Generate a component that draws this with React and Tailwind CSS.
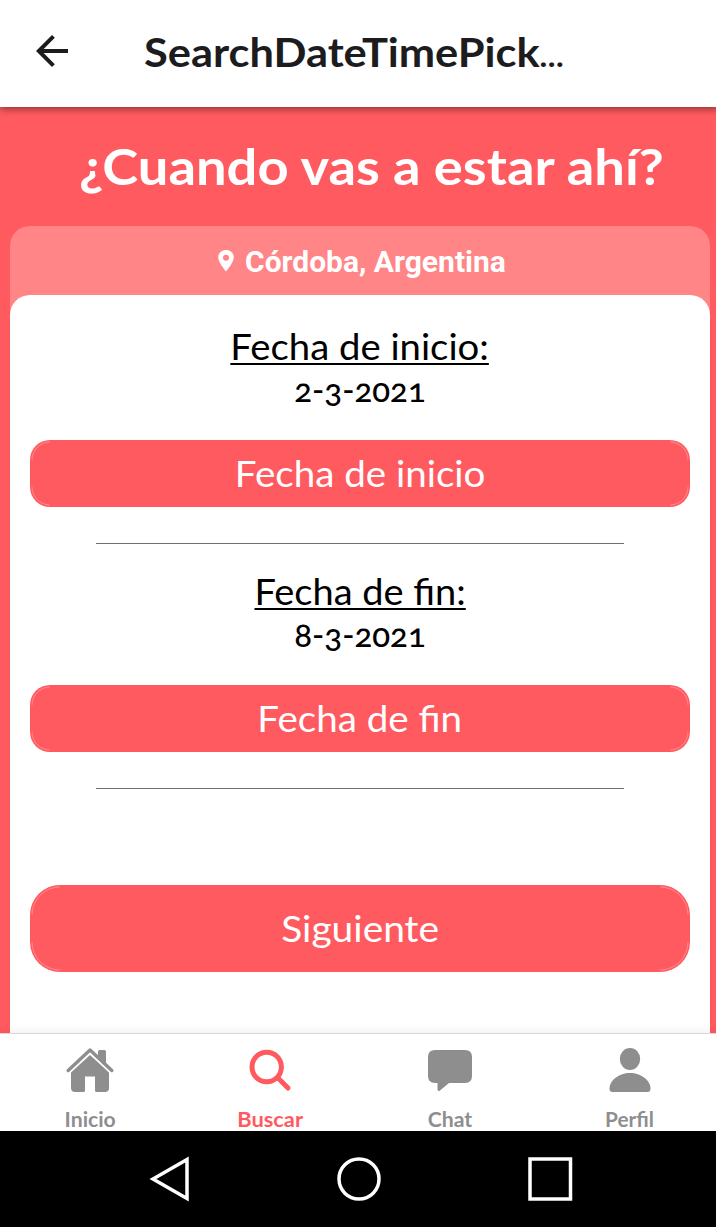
import { MdArrowBack } from "react-icons/md";

function PrimaryButton({ height, radius, className, textClass, children }) {
  const w = 660;
  const r = radius;
  const h = height;
  const arcs = [
    `M2 ${r}A${r - 2} ${r - 2} 0 0 1 ${r} 2`,
    `M${w - r} 2A${r - 2} ${r - 2} 0 0 1 ${w - 2} ${r}`,
    `M${w - 2} ${h - r}A${r - 2} ${r - 2} 0 0 1 ${w - r} ${h - 2}`,
    `M${r} ${h - 2}A${r - 2} ${r - 2} 0 0 1 2 ${h - r}`,
  ].join("");
  return (
    <button className={"relative flex w-[660px] shrink-0 items-center justify-center bg-[#ff5a5f] pb-[2px] text-[36px] text-white " + className}>
      <svg width={w} height={h} className="absolute left-0 top-0" fill="none" stroke="#ffffff" strokeOpacity="0.4" strokeWidth="0.7">
        <path d={arcs} />
      </svg>
      <span className={"inline-block whitespace-nowrap leading-[44px] " + textClass}>{children}</span>
    </button>
  );
}

function DateBlock({ title, date, button, titleClass }) {
  return (
    <section className="flex h-[245px] flex-col items-center">
      <h2 className={"h-[44px] whitespace-nowrap text-[36px] leading-[42px] text-black underline decoration-2 underline-offset-[3px] " + titleClass}>{title}</h2>
      <p className="h-[44px] whitespace-nowrap text-[33px] font-medium leading-[40px] text-black [font-feature-settings:'onum']">{date}</p>
      <PrimaryButton height={67} radius={20} className="mt-[27px] h-[67px] rounded-[20px]" textClass="scale-x-[1.07]">{button}</PrimaryButton>
      <hr className="mt-[36px] w-[528px] border-t border-[#707070]" />
    </section>
  );
}

function Tab({ label, active, labelClass, children }) {
  return (
    <div className={"flex w-[180px] flex-col items-center " + (active ? "text-[#ff5a5f]" : "text-[#8e8e8f]")}>
      <svg width="60" height="60" viewBox="0 0 60 60" className="mt-[6px]" fill="currentColor">{children}</svg>
      <span className={"mt-[7px] inline-block whitespace-nowrap text-[20px] font-bold leading-[24px] " + labelClass}>{label}</span>
    </div>
  );
}

export default function App() {
  return (
    <div className="h-[1227px] w-[716px] overflow-hidden bg-[#ff5a5f] font-['Lato','Open_Sans',sans-serif]">
      <div className="flex h-full w-[720px] flex-col">
        <header className="relative z-10 flex h-[107px] shrink-0 items-center bg-white pb-[5px] pl-[28px] shadow-[0_2px_7px_rgba(0,0,0,0.45)]">
          <MdArrowBack size={48} color="#1c1c1e" />
          <h1 className="ml-[68px] origin-left scale-x-[1.085] whitespace-nowrap pt-[2px] text-[40px] font-bold leading-[48px] text-[#1c1c1e]">
            SearchDateTimePick<span className="text-[28px] font-black leading-none">…</span>
          </h1>
        </header>
        <main className="flex min-h-0 flex-1 flex-col overflow-hidden">
          <h2 className="ml-[79px] mt-[29px] h-[60px] shrink-0 origin-left scale-x-[1.086] self-start whitespace-nowrap text-[50px] font-bold leading-[60px] text-white">¿Cuando vas a estar ahí?</h2>
          <div className="mx-[10px] mt-[30px] flex-1 rounded-t-[20px] bg-[#ff8587]">
            <div className="flex h-[69px] items-center gap-[10px] pl-[207px] text-white">
              <svg width="18" height="24" viewBox="0 0 18 24">
                <path fill="currentColor" fillRule="evenodd" d="M9 1C4.500 1 1.200 4.200 1.200 8.400C1.200 13.500 9 22.300 9 22.300S16.800 13.500 16.800 8.400C16.800 4.200 13.500 1 9 1ZM9 5.700a3 3 0 1 1 0 6a3 3 0 0 1 0-6Z" />
              </svg>
              <span className="whitespace-nowrap pt-[3px] font-['Roboto',sans-serif] text-[30px] font-bold leading-[36px]">Córdoba, Argentina</span>
            </div>
            <div className="flex h-[760px] flex-col items-center rounded-t-[20px] bg-white pt-[30px]">
              <DateBlock title="Fecha de inicio:" date="2-3-2021" button="Fecha de inicio" titleClass="scale-x-[1.063]" />
              <DateBlock title="Fecha de fin:" date="8-3-2021" button="Fecha de fin" titleClass="scale-x-[1.055]" />
              <PrimaryButton height={87} radius={30} className="mt-[70px] h-[87px] rounded-[30px]" textClass="scale-x-[1.08]">Siguiente</PrimaryButton>
            </div>
          </div>
        </main>
        <nav className="relative z-10 flex h-[98px] shrink-0 border-t border-[#d8d8d8] bg-white shadow-[0_-2px_8px_rgba(0,0,0,0.06)]">
          <Tab label="Inicio" labelClass="scale-x-[1.06]">
            <path d="M8.200 30.500L30 10L51.800 30.500" fill="none" stroke="currentColor" strokeWidth="3.400" strokeLinecap="round" strokeLinejoin="round" />
            <path d="M38 18V11.500Q38 10 39.500 10H44.500Q46 10 46 11.500V25.500Z" />
            <path d="M30 15L49 32.500V48Q49 52 45 52H36.500Q35 52 35 50.500V36.500H25V50.500Q25 52 23.500 52H15Q11 52 11 48V32.500Z" />
          </Tab>
          <Tab label="Buscar" active labelClass="scale-x-[1.09]">
            <circle cx="26.700" cy="27" r="14.700" fill="none" stroke="currentColor" strokeWidth="5" />
            <path d="M38 38L48 48" fill="none" stroke="currentColor" strokeWidth="5" strokeLinecap="round" />
          </Tab>
          <Tab label="Chat" labelClass="scale-x-[1.06]">
            <path d="M15 10H45Q52 10 52 17V36Q52 43 45 43H29L20 50.500Q17.500 52 17.500 49V43H15Q8 43 8 36V17Q8 10 15 10Z" />
          </Tab>
          <Tab label="Perfil" labelClass="scale-x-[1.04]">
            <ellipse cx="30" cy="19" rx="10.200" ry="11" />
            <path d="M30 33C41 33 50.500 40.500 50.500 48.500Q50.500 52 47.500 52H12.500Q9.500 52 9.500 48.500C9.500 40.500 19 33 30 33Z" />
          </Tab>
        </nav>
        <footer className="relative z-20 h-[96px] shrink-0 bg-black">
          <svg width="716" height="96" fill="none" stroke="#ffffff" strokeWidth="3.500">
            <path d="M153 48L187 28.500V67.500Z" />
            <circle cx="359" cy="48" r="20" />
            <rect x="530" y="28" width="40.500" height="40" />
          </svg>
        </footer>
      </div>
    </div>
  );
}
